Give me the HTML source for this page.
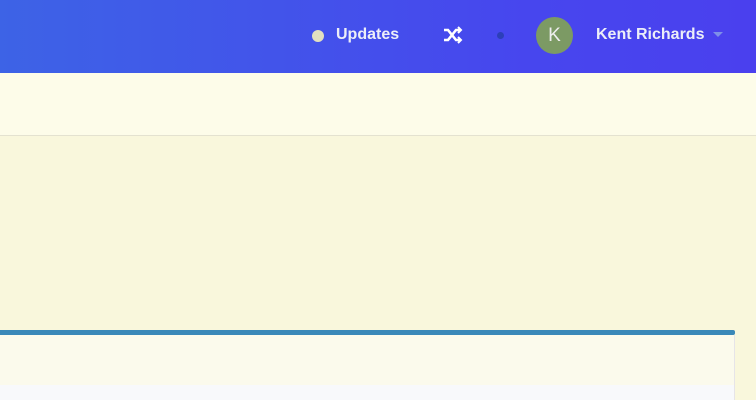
<!DOCTYPE html>
<html><head><style>
body{margin:0;width:756px;height:400px;overflow:hidden;background:#f9f7dc;font-family:"Liberation Sans",sans-serif;position:relative}
.hdr{position:absolute;left:0;top:0;width:756px;height:73px;background:linear-gradient(90deg,#3d63e6,#4746ee 70%,#4a40ee)}
.t{position:absolute;color:#eceef8;font-size:16px;font-weight:bold;top:26px}
.sub{position:absolute;left:0;top:73px;width:756px;height:62px;background:#fdfce9;border-bottom:1px solid #e4e2d0}
.bar{position:absolute;left:0;top:330px;width:735px;height:5px;background:#3a88b8;border-radius:0 2px 2px 0}
.box{position:absolute;left:0;top:335px;width:734px;height:65px;background:#fbfaec;border-right:1px solid #e6e4e8}
.box2{position:absolute;left:0;top:385px;width:734px;height:15px;background:#f8f9fb}
</style></head><body>
<div class="hdr">
<div style="position:absolute;left:312px;top:30px;width:12px;height:12px;border-radius:50%;background:#e2e0c0"></div>
<div class="t" style="left:336px">Updates</div>
<svg style="position:absolute;left:443px;top:26px" width="20" height="18" viewBox="0 0 20 18" fill="none" stroke="#fff" stroke-width="2.6"><path d="M1 4h4l8 10h4M1 14h4l8-10h4"/><path d="M15 1l3 3-3 3M15 11l3 3-3 3" stroke-width="2"/></svg>
<div style="position:absolute;left:497px;top:32px;width:7px;height:7px;border-radius:50%;background:#2c3fb8"></div>
<div style="position:absolute;left:536px;top:17px;width:37px;height:37px;border-radius:50%;background:#7c9a64;color:#eee;font-size:19px;text-align:center;line-height:37px">K</div>
<div class="t" style="left:596px">Kent Richards</div>
<div style="position:absolute;left:713px;top:32px;border:5px solid transparent;border-top:5px solid #7e8fe8;border-bottom:0"></div>
</div>
<div class="sub"></div>
<div class="bar"></div>
<div class="box"></div>
<div class="box2"></div>
</body></html>
